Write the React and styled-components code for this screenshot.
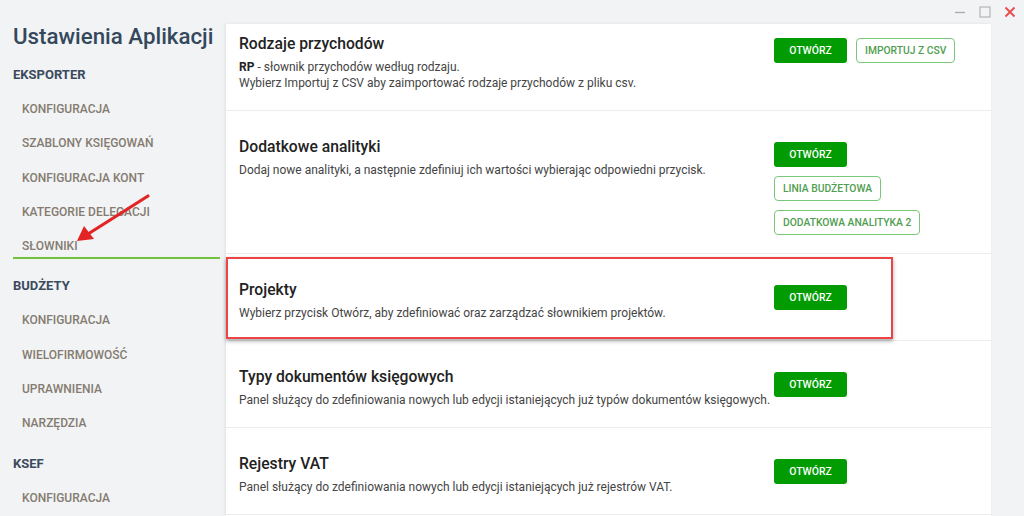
import React from "react";
import styled, { createGlobalStyle } from "styled-components";

const Global = createGlobalStyle`
  html, body { margin: 0; padding: 0; background: #f1f3f5; }
  body { font-family: Roboto, "Noto Sans", "Liberation Sans", sans-serif; }
  * { box-sizing: border-box; }
`;

const Page = styled.div`
  position: relative;
  display: flex;
  width: 1024px;
  height: 516px;
  overflow: hidden;
  background: #f1f3f5;
`;

const Sidebar = styled.aside`
  width: 222px;
  flex-shrink: 0;
  padding: 21px 2px 0 13px;
  display: flex;
  flex-direction: column;
`;

const AppTitle = styled.h1`
  margin: 0;
  font-size: 22.3px;
  line-height: 30px;
  font-weight: 500;
  color: #34485c;
  white-space: nowrap;
`;

const Section = styled.div`
  margin-top: ${(p) => p.$mt}px;
  display: flex;
  flex-direction: column;
`;

const SectionHead = styled.div`
  font-size: 13px;
  font-weight: 700;
  line-height: 20px;
  padding: 7px 0;
  color: #3b4a5c;
  text-transform: uppercase;
`;

const NavItem = styled.div`
  font-size: 12px;
  font-weight: 500;
  line-height: 20.3px;
  padding: ${(p) => (p.$active ? "7px 9px 1px" : "7px 9px")};
  color: #857b70;
  text-transform: uppercase;
  border-bottom: ${(p) => (p.$active ? "2px solid #72c23c" : "none")};
  margin-bottom: ${(p) => (p.$active ? "3px" : "0")};
`;

const Main = styled.main`
  flex: 1;
  display: flex;
  flex-direction: column;
  margin-left: 4px;
  min-width: 0;
`;

const TopBar = styled.div`
  height: 24px;
  flex-shrink: 0;
  display: flex;
  justify-content: flex-end;
  align-items: center;
  padding-right: 2px;
`;

const WinBtn = styled.div`
  width: 25px;
  height: 22px;
  display: flex;
  align-items: center;
  justify-content: center;
`;

const Card = styled.section`
  width: 765px;
  flex: 1;
  background: #fff;
  box-shadow: -1px 0 3px rgba(0, 0, 0, 0.08);
  display: flex;
  flex-direction: column;
`;

const Row = styled.div`
  position: relative;
  display: flex;
  padding: ${(p) => p.$pad || "26px 0 19px 13px"};
  border-bottom: 1px solid #ececec;
  flex-shrink: 0;
`;

const TextCol = styled.div`
  width: 535px;
  flex-shrink: 0;
`;

const RowTitle = styled.h2`
  margin: 0 0 5px;
  font-size: 15.7px;
  line-height: 20px;
  font-weight: 500;
  color: #222;
`;

const Desc = styled.p`
  margin: 0;
  font-size: 12px;
  line-height: 16px;
  color: #444;
  white-space: nowrap;
  b { font-weight: 700; color: #222; }
`;

const BtnCol = styled.div`
  display: flex;
  flex-direction: ${(p) => (p.$stack ? "column" : "row")};
  align-items: flex-start;
  gap: 9px;
  margin-top: ${(p) => p.$mt ?? 5}px;
`;

const Primary = styled.button`
  min-width: 73px;
  height: 25px;
  padding: 0 12px;
  border: none;
  border-radius: 3px;
  background: #029c02;
  color: #fff;
  font-family: inherit;
  font-size: 10.4px;
  font-weight: 500;
  text-transform: uppercase;
  cursor: pointer;
`;

const Outline = styled.button`
  height: 25px;
  padding: 0 8px;
  border: 1px solid #79c879;
  border-radius: 4px;
  background: #fff;
  color: #4f9d4f;
  font-family: inherit;
  font-size: 10.3px;
  font-weight: 500;
  text-transform: uppercase;
  cursor: pointer;
`;

const Highlight = styled.div`
  position: absolute;
  left: 0;
  top: 3px;
  width: 667px;
  height: 82px;
  border: 2px solid #ec4444;
  box-shadow: 0 2px 4px rgba(0, 0, 0, 0.35);
  pointer-events: none;
`;

const Arrow = styled.svg`
  position: absolute;
  left: 70px;
  top: 190px;
  pointer-events: none;
`;

const rows = [
  {
    title: "Rodzaje przychodów",
    desc: (
      <>
        <b>RP</b> - słownik przychodów według rodzaju.
        <br />
        Wybierz Importuj z CSV aby zaimportować rodzaje przychodów z pliku csv.
      </>
    ),
    buttons: ["Importuj z CSV"],
    pad: "10px 0 19px 13px",
    mt: 4,
  },
  {
    title: "Dodatkowe analityki",
    desc: "Dodaj nowe analityki, a następnie zdefiniuj ich wartości wybierając odpowiedni przycisk.",
    buttons: ["Linia budżetowa", "Dodatkowa analityka 2"],
    stack: true,
    pad: "26px 0 18px 13px",
  },
  {
    title: "Projekty",
    desc: "Wybierz przycisk Otwórz, aby zdefiniować oraz zarządzać słownikiem projektów.",
    buttons: [],
    highlight: true,
  },
  {
    title: "Typy dokumentów księgowych",
    desc: "Panel służący do zdefiniowania nowych lub edycji istaniejących już typów dokumentów księgowych.",
    buttons: [],
  },
  {
    title: "Rejestry VAT",
    desc: "Panel służący do zdefiniowania nowych lub edycji istaniejących już rejestrów VAT.",
    buttons: [],
  },
];

const nav = [
  { head: "Eksporter", items: ["Konfiguracja", "Szablony księgowań", "Konfiguracja kont", "Kategorie delegacji", "Słowniki"], active: 4, mt: 7 },
  { head: "Budżety", items: ["Konfiguracja", "Wielofirmowość", "Uprawnienia", "Narzędzia"], mt: 7 },
  { head: "KSEF", items: ["Konfiguracja"], mt: 6 },
];

export default function App() {
  return (
    <>
      <Global />
      <Page>
        <Sidebar>
          <AppTitle>Ustawienia Aplikacji</AppTitle>
          {nav.map((s) => (
            <Section key={s.head} $mt={s.mt}>
              <SectionHead>{s.head}</SectionHead>
              {s.items.map((it, i) => (
                <NavItem key={it} $active={s.active === i}>
                  {it}
                </NavItem>
              ))}
            </Section>
          ))}
        </Sidebar>
        <Main>
          <TopBar>
            <WinBtn>
              <svg width="12" height="12" viewBox="0 0 12 12">
                <line x1="1" y1="6.5" x2="11" y2="6.5" stroke="#a9adb1" strokeWidth="1.3" />
              </svg>
            </WinBtn>
            <WinBtn>
              <svg width="12" height="12" viewBox="0 0 12 12">
                <rect x="1" y="1" width="10" height="10" fill="none" stroke="#b3b6ba" strokeWidth="1.2" />
              </svg>
            </WinBtn>
            <WinBtn>
              <svg width="12" height="12" viewBox="0 0 12 12">
                <path d="M1.5 1.5 L10.5 10.5 M10.5 1.5 L1.5 10.5" stroke="#ec4a4a" strokeWidth="1.8" />
              </svg>
            </WinBtn>
          </TopBar>
          <Card>
            {rows.map((r) => (
              <Row key={r.title} $pad={r.pad}>
                <TextCol>
                  <RowTitle>{r.title}</RowTitle>
                  <Desc>{r.desc}</Desc>
                </TextCol>
                <BtnCol $stack={r.stack} $mt={r.mt}>
                  <Primary>Otwórz</Primary>
                  {r.buttons.map((b) => (
                    <Outline key={b}>{b}</Outline>
                  ))}
                </BtnCol>
                {r.highlight && <Highlight />}
              </Row>
            ))}
          </Card>
        </Main>
        <Arrow width="90" height="60" viewBox="0 0 90 60">
          <line x1="78" y1="6" x2="18" y2="44" stroke="#e22424" strokeWidth="3.2" strokeLinecap="round" />
          <polygon points="7,51 14,36 24,49" fill="#e22424" />
        </Arrow>
      </Page>
    </>
  );
}
